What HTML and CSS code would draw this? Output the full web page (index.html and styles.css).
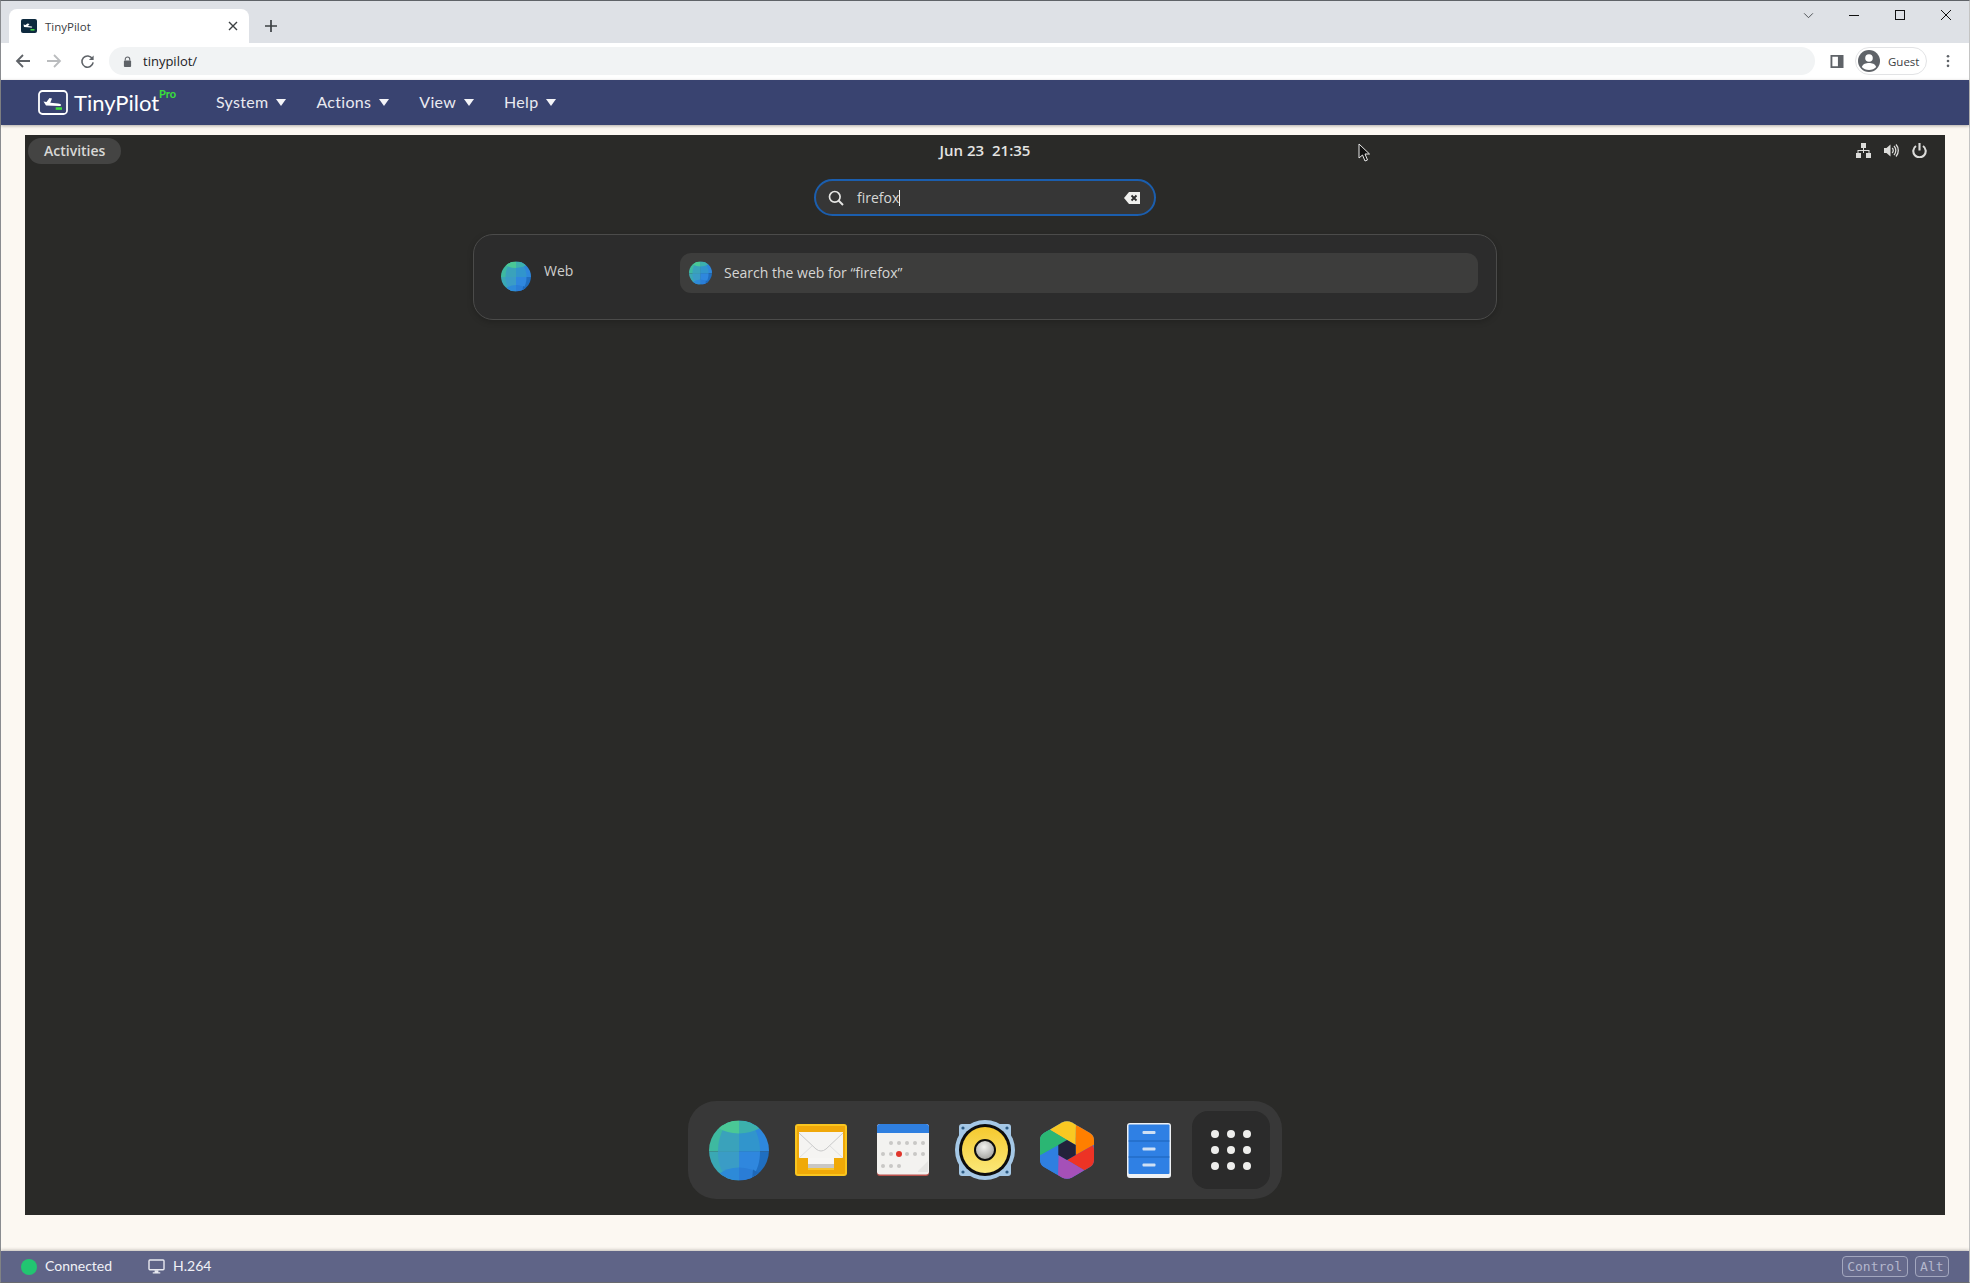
FILE: index.html
```html
<!DOCTYPE html>
<html lang="en">
<head>
<meta charset="utf-8">
<title>TinyPilot</title>
<link rel="stylesheet" href="styles.css">
</head>
<body>
<svg class="defs" width="0" height="0" aria-hidden="true">
  <defs>
    <clipPath id="globe-clip"><circle cx="30" cy="30" r="30"/></clipPath>
    <symbol id="globe" viewBox="0 0 60 60">
      <g clip-path="url(#globe-clip)">
        <rect x="0" y="0" width="30" height="31" fill="#3eb9a0"/>
        <rect x="0" y="31" width="30" height="29" fill="#3aa8b4"/>
        <rect x="30" y="0" width="30" height="31" fill="#2e87dc"/>
        <rect x="30" y="31" width="30" height="29" fill="#1f6ec0"/>
        <path d="M18 2C11 12 9 22 9 31H30V2Z" fill="#3aa2bb"/>
        <path d="M42 2C49 12 51 22 51 31H30V2Z" fill="#3195cc"/>
        <path d="M9 31C9 40 11 50 18 58H30V31Z" fill="#3a9cc6"/>
        <path d="M51 31C51 40 49 50 42 58H30V31Z" fill="#2f87de"/>
        <path d="M6 6Q18 13 30 13V0H6Z" fill="#4ac896"/>
        <path d="M54 6Q42 13 30 13V0H54Z" fill="#3cb0ad"/>
        <path d="M9 54Q18 47 30 47V60H9Z" fill="#2d8ad8"/>
        <path d="M51 54Q42 47 30 47V60H51Z" fill="#2a7dd6"/>
        <path d="M44 49L52 54L43 60Z" fill="#1e68b8"/>
      </g>
    </symbol>
    <linearGradient id="cone" x1="0" y1="0" x2="0" y2="1">
      <stop offset="0" stop-color="#f5c92f"/><stop offset="1" stop-color="#fbe878"/>
    </linearGradient>
    <radialGradient id="cap" cx="0.45" cy="0.35" r="0.7">
      <stop offset="0" stop-color="#f2f2f0"/><stop offset="1" stop-color="#9b9b97"/>
    </radialGradient>
    <clipPath id="hex-clip"><path d="M22 2.500Q27 0 32 2.500L50 13Q54 15.500 54 20V40Q54 44.500 50 47L32 57.500Q27 60 22 57.500L4 47Q0 44.500 0 40V20Q0 15.500 4 13Z"/></clipPath>
  </defs>
</svg>

<div class="window">
  <header class="tabbar">
    <div class="tab">
      <svg class="favicon" viewBox="0 0 16 14"><rect width="16" height="14" rx="2" fill="#0e2a3f"/><path d="M2.500 5.500L4.500 6L6.500 4.500L8.500 5L7 7L10.500 7.500C12 7.900 11 8.800 9.500 8.600L3 8Z" fill="#fff"/><rect x="9.500" y="10" width="4" height="1.600" fill="#3fd13f"/></svg>
      <span class="tab-title">TinyPilot</span>
      <svg class="tab-close" viewBox="0 0 10 10"><path d="M1 1L9 9M9 1L1 9" stroke="#3c4043" stroke-width="1.400"/></svg>
    </div>
    <svg class="new-tab" viewBox="0 0 14 14"><path d="M7 1V13M1 7H13" stroke="#3c4043" stroke-width="1.700"/></svg>
    <div class="window-controls">
      <svg class="win-chevron" viewBox="0 0 12 8"><path d="M1 1.500L6 6.500L11 1.500" fill="none" stroke="#3c4043" stroke-width="1"/></svg>
      <svg class="win-btn" viewBox="0 0 12 12"><path d="M1 6.500H11" stroke="#111" stroke-width="1"/></svg>
      <svg class="win-btn" viewBox="0 0 12 12"><rect x="1.500" y="1.500" width="9" height="9" fill="none" stroke="#111" stroke-width="1"/></svg>
      <svg class="win-btn" viewBox="0 0 12 12"><path d="M1 1L11 11M11 1L1 11" stroke="#111" stroke-width="1"/></svg>
    </div>
  </header>

  <div class="toolbar">
    <svg class="nav-icon" viewBox="0 0 16 16"><path d="M15 8H2.500M8 2L2 8L8 14" fill="none" stroke="#5f6368" stroke-width="1.800"/></svg>
    <svg class="nav-icon forward" viewBox="0 0 16 16"><path d="M1 8H13.500M8 2L14 8L8 14" fill="none" stroke="#babcbe" stroke-width="1.800"/></svg>
    <svg class="nav-icon reload" viewBox="0 0 16 16"><path d="M13.200 5A6 6 0 1 0 14 9" fill="none" stroke="#5f6368" stroke-width="1.700"/><path d="M14.500 1.500V6.500H9.500Z" fill="#5f6368"/></svg>
    <div class="omnibox">
      <svg class="lock" viewBox="0 0 10 12"><path d="M2.500 5V3.500a2.500 2.500 0 0 1 5 0V5" fill="none" stroke="#5f6368" stroke-width="1.200"/><rect x="1" y="5" width="8" height="7" rx="1" fill="#5f6368"/></svg>
      <span class="url">tinypilot/</span>
    </div>
    <svg class="side-panel" viewBox="0 0 14 14"><path fill-rule="evenodd" d="M0 0H14V14H0ZM2 2V12H8V2Z" fill="#5f6368"/></svg>
    <div class="profile">
      <svg class="avatar" viewBox="0 0 22 22"><circle cx="11" cy="11" r="11" fill="#5f6368"/><circle cx="11" cy="8" r="3.800" fill="#fff"/><path d="M3.800 17C5 13.800 8 13 11 13S17 13.800 18.200 17C16.500 19 14 20 11 20S5.500 19 3.800 17Z" fill="#fff"/></svg>
      <span class="profile-name">Guest</span>
    </div>
    <svg class="kebab" viewBox="0 0 4 16"><circle cx="2" cy="2.500" r="1.500" fill="#5f6368"/><circle cx="2" cy="8" r="1.500" fill="#5f6368"/><circle cx="2" cy="13.500" r="1.500" fill="#5f6368"/></svg>
  </div>

  <nav class="navbar">
    <div class="brand">
      <svg class="brand-mark" viewBox="0 0 30 25"><rect x="1" y="1" width="28" height="23" rx="3.500" fill="none" stroke="#fff" stroke-width="1.800"/><path d="M5.500 11.500L8.500 12L11.500 8L14 8.500L12.300 12.700L20 13.500C24 14 24 16 21 16L8 15.500Z" fill="#fff"/><rect x="17.700" y="17.300" width="6.300" height="2.500" fill="#3fe03f"/></svg>
      <span class="brand-name">TinyPilot</span>
      <span class="brand-pro">Pro</span>
    </div>
    <ul class="menu">
      <li class="menu-item">System<span class="caret"></span></li>
      <li class="menu-item">Actions<span class="caret"></span></li>
      <li class="menu-item">View<span class="caret"></span></li>
      <li class="menu-item">Help<span class="caret"></span></li>
    </ul>
  </nav>

  <main class="stage">
    <section class="screen">
      <div class="topbar">
        <span class="activities">Activities</span>
        <span class="clock">Jun 23&nbsp; 21:35</span>
        <div class="tray">
          <svg class="tray-icon" viewBox="0 0 15 15"><path d="M5 0H10V5H8V7H13.500V10H12.500V8H8V10H7V8H2.500V10H1.500V7H7V5H5Z" fill="#dcdcda"/><rect x="0" y="10" width="5" height="5" fill="#dcdcda"/><rect x="10" y="10" width="5" height="5" fill="#dcdcda"/></svg>
          <svg class="tray-icon" viewBox="0 0 15 15"><path d="M0 5H2.500L6.500 1.500V13.500L2.500 10H0Z" fill="#dcdcda"/><path d="M8.200 5a3.500 3.500 0 0 1 0 5M10 3a6.500 6.500 0 0 1 0 9M12 1.500a9 9 0 0 1 0 12" fill="none" stroke="#dcdcda" stroke-width="1.300"/></svg>
          <svg class="tray-icon" viewBox="0 0 15 15"><path d="M4 3a6.200 6.200 0 1 0 7 0" fill="none" stroke="#dcdcda" stroke-width="2.100"/><path d="M7.500 0V7.500" stroke="#dcdcda" stroke-width="2.100"/></svg>
        </div>
      </div>

      <div class="search">
        <svg class="search-icon" viewBox="0 0 16 16"><circle cx="6.800" cy="6.800" r="5.300" fill="none" stroke="#e6e6e4" stroke-width="1.700"/><path d="M10.500 10.500L15 15" stroke="#e6e6e4" stroke-width="2"/></svg>
        <span class="search-text">firefox</span>
        <span class="search-cursor"></span>
        <svg class="search-clear" viewBox="0 0 16 12"><path d="M5 0H16V12H5L0 6Z" fill="#f0f0ee"/><path d="M7.500 3.500L12.500 8.500M12.500 3.500L7.500 8.500" stroke="#2e2e2e" stroke-width="1.800"/></svg>
      </div>

      <div class="results">
        <div class="provider">
          <svg class="provider-icon"><use href="#globe"/></svg>
          <span class="provider-name">Web</span>
        </div>
        <div class="result">
          <svg class="result-icon"><use href="#globe"/></svg>
          <span class="result-text">Search the web for “firefox”</span>
        </div>
      </div>

      <div class="dock">
        <svg class="dock-icon globe-icon"><use href="#globe"/></svg>

        <svg class="dock-icon mail-icon" viewBox="0 0 52 52">
          <rect width="52" height="52" rx="3" fill="#f9c51f"/>
          <rect x="2" y="2" width="48" height="36" fill="#f0a80a"/>
          <rect x="4" y="8" width="44" height="28" fill="#f5f4f2"/>
          <path d="M4 9L21 25Q26 29 31 25L48 9" fill="none" stroke="#c9c9c9" stroke-width="1"/>
          <path d="M4 34L17 22M48 34L35 22" stroke="#e0e0e0" stroke-width="1"/>
          <rect x="13" y="34" width="26" height="6" fill="#f7f6f4"/>
          <rect x="13" y="40" width="26" height="4" fill="#c9c7c4"/>
          <rect x="13" y="44" width="26" height="2" fill="#f8c42c"/>
          <path d="M2 34H13V46H39V34H50V49Q50 50 49 50H3Q2 50 2 49Z" fill="#f0a907"/>
        </svg>

        <svg class="dock-icon cal-icon" viewBox="0 0 52 52">
          <rect y="0" width="52" height="52" rx="3" fill="#b9514c"/>
          <rect y="0" width="52" height="50.500" rx="3" fill="#f3f2f0"/>
          <path d="M0 9V3Q0 0 3 0H49Q52 0 52 3V9Z" fill="#2f7fe0"/>
          <g fill="#c9c8c6">
            <circle cx="14" cy="19" r="2"/><circle cx="22" cy="19" r="2"/><circle cx="30" cy="19" r="2"/><circle cx="38" cy="19" r="2"/><circle cx="46" cy="19" r="2"/>
            <circle cx="6" cy="30" r="2"/><circle cx="14" cy="30" r="2"/><circle cx="30" cy="30" r="2"/><circle cx="38" cy="30" r="2"/><circle cx="46" cy="30" r="2"/>
            <circle cx="6" cy="42" r="2"/><circle cx="14" cy="42" r="2"/><circle cx="22" cy="42" r="2"/>
          </g>
          <circle cx="22" cy="30" r="3" fill="#e0362c"/>
          <path d="M41 47L51 37V48H41Z" fill="#e6e5e3"/>
        </svg>

        <svg class="dock-icon speaker-icon" viewBox="0 0 60 60">
          <rect x="4" y="4" width="52" height="52" rx="3" fill="#a5c8e6"/>
          <circle cx="30" cy="30" r="30" fill="#a5c8e6"/>
          <circle cx="8" cy="8" r="1.600" fill="#2e5c85"/><circle cx="52" cy="8" r="1.600" fill="#2e5c85"/><circle cx="8" cy="52" r="1.600" fill="#2e5c85"/><circle cx="52" cy="52" r="1.600" fill="#2e5c85"/>
          <circle cx="30" cy="30" r="26" fill="#0d0d0d"/>
          <circle cx="30" cy="30" r="23" fill="url(#cone)"/>
          <circle cx="30" cy="30" r="10" fill="url(#cap)" stroke="#0d0d0d" stroke-width="2"/>
        </svg>

        <svg class="dock-icon prism-icon" viewBox="0 0 54 60">
          <g clip-path="url(#hex-clip)">
            <rect width="54" height="60" fill="#2f7fe0"/>
            <path d="M4 6.300L27 -6L36 0V25L27 20Z" fill="#2bb673" transform="rotate(300 27 30)"/>
            <path d="M9.850 9.700L27 -6L36 0L35.700 25L27 20Z" fill="#f9c822"/>
            <path d="M9.850 9.700L27 -6L36 0L35.700 25L27 20Z" fill="#ff7f00" transform="rotate(60 27 30)"/>
            <path d="M9.850 9.700L27 -6L36 0L35.700 25L27 20Z" fill="#ed3325" transform="rotate(120 27 30)"/>
            <path d="M9.850 9.700L27 -6L36 0L35.700 25L27 20Z" fill="#a550b8" transform="rotate(180 27 30)"/>
            <path d="M9.850 9.700L27 -6L36 0L35.700 25L27 20Z" fill="#2f7fe0" transform="rotate(240 27 30)"/>
            <path d="M9.850 9.700L27 -6L36 0L35.700 25L27 20Z" fill="#2bb673" transform="rotate(300 27 30)"/>
          </g>
          <path d="M27 20L35.700 25V35L27 40L18.300 35V25Z" fill="#22223a"/>
        </svg>

        <svg class="dock-icon files-icon" viewBox="0 0 44 55">
          <rect width="44" height="55" rx="3" fill="#eef1f4"/>
          <rect x="1.500" y="1.500" width="41" height="49.500" rx="1" fill="#2f80e4"/>
          <path d="M1.500 18H42.500M1.500 34H42.500" stroke="#1d63b8" stroke-width="1"/>
          <rect x="15.500" y="8" width="13" height="3" rx="1" fill="#cfe0f4"/>
          <rect x="15.500" y="24.500" width="13" height="3" rx="1" fill="#cfe0f4"/>
          <rect x="15.500" y="40.500" width="13" height="3" rx="1" fill="#cfe0f4"/>
        </svg>

        <div class="app-grid">
          <svg class="grid-dots" viewBox="0 0 40 40">
            <g fill="#eeeeec">
              <circle cx="4" cy="4" r="4"/><circle cx="20" cy="4" r="4"/><circle cx="36" cy="4" r="4"/>
              <circle cx="4" cy="20" r="4"/><circle cx="20" cy="20" r="4"/><circle cx="36" cy="20" r="4"/>
              <circle cx="4" cy="36" r="4"/><circle cx="20" cy="36" r="4"/><circle cx="36" cy="36" r="4"/>
            </g>
          </svg>
        </div>
      </div>

      <svg class="pointer" viewBox="0 0 13 19"><path d="M1 1V15L4.500 12L7 18L9.500 17L7 11H11.500Z" fill="#111" stroke="#e8e8e8" stroke-width="1"/></svg>
    </section>
  </main>

  <footer class="statusbar">
    <span class="status-dot"></span>
    <span class="status-text">Connected</span>
    <svg class="monitor" viewBox="0 0 18 16"><rect x="1" y="1" width="16" height="10.500" rx="1" fill="none" stroke="#e8e9f0" stroke-width="1.500"/><path d="M7 12H11V14H13V15.500H5V14H7Z" fill="#e8e9f0"/></svg>
    <span class="status-text">H.264</span>
    <div class="keys">
      <kbd class="key">Control</kbd>
      <kbd class="key">Alt</kbd>
    </div>
  </footer>
</div>
</body>
</html>
```

FILE: styles.css
```css
* { box-sizing: border-box; }

html, body {
  margin: 0;
  height: 100%;
  overflow: hidden;
  background: #fcf8f2;
}

body { font-family: "Open Sans", "Liberation Sans", sans-serif; }

.defs { position: absolute; }

.window {
  display: flex;
  flex-direction: column;
  width: 1970px;
  height: 1283px;
  border-top: 1px solid #5f6368;
  border-left: 1px solid #8a8c90;
  border-right: 1px solid #c4c4c4;
  border-bottom: 1px solid #6b6d72;
}

/* browser tab strip */
.tabbar {
  display: flex;
  align-items: flex-end;
  height: 42px;
  padding-left: 8px;
  background: #dee1e6;
  flex: none;
}

.tab {
  display: flex;
  align-items: center;
  width: 240px;
  height: 34px;
  padding: 0 11px 0 12px;
  background: #fff;
  border-radius: 8px 8px 0 0;
}

.favicon { width: 16px; height: 14px; margin-right: 8px; }

.tab-title {
  flex: 1;
  font-size: 11.500px;
  color: #3c4043;
}

.tab-close { width: 10px; height: 10px; }

.new-tab {
  width: 14px;
  height: 14px;
  margin: 0 0 10px 15px;
}

.window-controls {
  display: flex;
  align-items: center;
  margin-left: auto;
  height: 100%;
  align-self: flex-start;
  padding: 0 17px 14px 0;
}

.win-chevron { width: 11px; height: 7px; margin-right: 34px; }
.win-btn { width: 12px; height: 12px; margin-left: 34px; }
.win-chevron + .win-btn { margin-left: 0; }

/* address row */
.toolbar {
  display: flex;
  align-items: center;
  height: 37px;
  padding: 0 0 1px 14px;
  background: #fff;
  flex: none;
}

.nav-icon { width: 16px; height: 16px; }
.forward { margin-left: 15px; }
.reload { margin-left: 18px; width: 15px; height: 15px; }

.omnibox {
  display: flex;
  align-items: center;
  width: 1706px;
  height: 28px;
  margin-left: 14px;
  padding-left: 14px;
  border-radius: 14px;
  background: #f1f3f4;
}

.lock { width: 9px; height: 11px; margin-right: 11px; }
.url { font-size: 13px; color: #202124; }

.side-panel { width: 14px; height: 13px; margin-left: 15px; }

.profile {
  display: flex;
  align-items: center;
  width: 72px;
  height: 28px;
  margin-left: 11px;
  padding-left: 2px;
  border: 1px solid #e2e3e5;
  border-radius: 14px;
}

.avatar { width: 22px; height: 22px; }
.profile-name { margin-left: 8px; font-size: 11.500px; color: #3c4043; }

.kebab { width: 4px; height: 14px; margin-left: 19px; }

/* TinyPilot nav */
.navbar {
  display: flex;
  align-items: center;
  height: 45px;
  padding-left: 37px;
  background: #394370;
  box-shadow: 0 1px 3px rgba(60, 55, 50, 0.4);
  flex: none;
  position: relative;
}

.brand { display: flex; align-items: center; width: 178px; }
.brand-mark { width: 30px; height: 25px; }

.brand-name {
  margin-left: 6px;
  font-family: "Lato", sans-serif;
  font-size: 22px;
  color: #fff;
  line-height: 1;
}

.brand-pro {
  align-self: flex-start;
  margin-top: -2px;
  font-family: "Lato", sans-serif;
  font-size: 11px;
  font-weight: 700;
  line-height: 12px;
  color: #39e039;
}

.menu {
  display: flex;
  gap: 30px;
  margin: 0;
  padding: 0 0 2px;
  list-style: none;
}

.menu-item {
  display: flex;
  align-items: center;
  font-family: "Lato", sans-serif;
  font-size: 16px;
  letter-spacing: 0.3px;
  color: #e9eaf1;
}

.caret {
  width: 0;
  height: 0;
  margin: 2px 0 0 8px;
  border-left: 5px solid transparent;
  border-right: 5px solid transparent;
  border-top: 7px solid #f4f4f8;
}

/* remote desktop */
.stage {
  flex: 1;
  padding: 10px 24px 0;
  background: #fcf8f2;
  min-height: 0;
}

.screen {
  position: relative;
  display: flex;
  flex-direction: column;
  align-items: center;
  width: 1920px;
  height: 1080px;
  background: #2a2a28;
  color: #e8e8e6;
}

.topbar {
  display: grid;
  grid-template-columns: 1fr auto 1fr;
  align-items: center;
  width: 100%;
  height: 30px;
  padding: 0 3px;
  flex: none;
}

.activities {
  justify-self: start;
  margin-top: 2px;
  padding: 3px 16px 4px;
  border-radius: 13px;
  background: #444443;
  font-size: 14px;
  font-weight: 600;
  line-height: 19px;
  color: #d8d8d6;
}

.clock { font-size: 15px; font-weight: 600; color: #e4e4e2; }

.tray {
  justify-self: end;
  display: flex;
  gap: 13px;
  margin-right: 15px;
}

.tray-icon { width: 15px; height: 15px; }

.search {
  display: flex;
  align-items: center;
  width: 342px;
  height: 37px;
  margin-top: 14px;
  padding: 0 14px 0 12px;
  border: 2px solid #1b5eae;
  border-radius: 19px;
  background: #363636;
  flex: none;
}

.search-icon { width: 16px; height: 16px; }

.search-text {
  margin-left: 13px;
  font-size: 14px;
  color: #d8d8d6;
}

.search-cursor {
  width: 1px;
  height: 16px;
  background: #f0f0f0;
}

.search-clear { width: 16px; height: 12px; margin-left: auto; }

.results {
  display: flex;
  align-items: flex-start;
  width: 1024px;
  height: 86px;
  margin-top: 18px;
  padding: 18px 18px 0 27px;
  border: 1px solid #4b4b4a;
  border-radius: 20px;
  background: #2c2c2c;
  box-shadow: 0 2px 6px rgba(0, 0, 0, 0.2);
  flex: none;
}

.provider {
  display: flex;
  align-items: flex-start;
  width: 179px;
  padding-top: 8px;
}

.provider-icon { width: 30px; height: 31px; }

.provider-name {
  margin-left: 13px;
  font-size: 14px;
  color: #cfcfcd;
  line-height: 19px;
}

.result {
  display: flex;
  align-items: center;
  flex: 1;
  height: 40px;
  padding-left: 9px;
  border-radius: 11px;
  background: #3d3d3c;
}

.result-icon { width: 23px; height: 24px; }

.result-text {
  margin-left: 12px;
  padding-bottom: 2px;
  font-size: 14px;
  color: #d6d6d4;
}

.dock {
  display: flex;
  align-items: center;
  width: 594px;
  height: 98px;
  margin-top: auto;
  margin-bottom: 16px;
  padding-left: 21px;
  border-radius: 28px;
  background: #383838;
  flex: none;
}

.dock-icon { flex: none; }
.globe-icon { width: 60px; height: 61px; }
.mail-icon { width: 52px; height: 52px; margin-left: 26px; }
.cal-icon { width: 52px; height: 52px; margin-left: 30px; }
.speaker-icon { width: 60px; height: 60px; margin-left: 26px; }
.prism-icon { width: 54px; height: 60px; margin-left: 25px; }
.files-icon { width: 44px; height: 55px; margin-left: 33px; }

.app-grid {
  display: flex;
  align-items: center;
  justify-content: center;
  width: 78px;
  height: 78px;
  margin-left: 21px;
  border-radius: 16px;
  background: #2b2b2b;
}

.grid-dots { width: 40px; height: 40px; }

.pointer {
  position: absolute;
  left: 1333px;
  top: 8px;
  width: 13px;
  height: 19px;
}

/* status bar */
.statusbar {
  display: flex;
  align-items: center;
  height: 31px;
  padding: 0 20px;
  background: #5f6487;
  box-shadow: 0 -1px 3px rgba(60, 55, 50, 0.3);
  flex: none;
  position: relative;
}

.status-dot {
  width: 16px;
  height: 16px;
  border-radius: 50%;
  background: #22c571;
}

.status-text {
  margin-left: 8px;
  padding-bottom: 2px;
  font-family: "Lato", sans-serif;
  font-size: 14px;
  color: #f0f1f6;
}

.monitor { width: 17px; height: 15px; margin-left: 36px; }

.keys {
  display: flex;
  gap: 7px;
  margin-left: auto;
}

.key {
  padding: 0 4.500px;
  height: 21px;
  border: 1px solid #a3a7bf;
  border-radius: 4px;
  font-family: "DejaVu Sans Mono", monospace;
  font-size: 13px;
  line-height: 19px;
  color: #b4b7cd;
  background: #666a8c;
}
```
